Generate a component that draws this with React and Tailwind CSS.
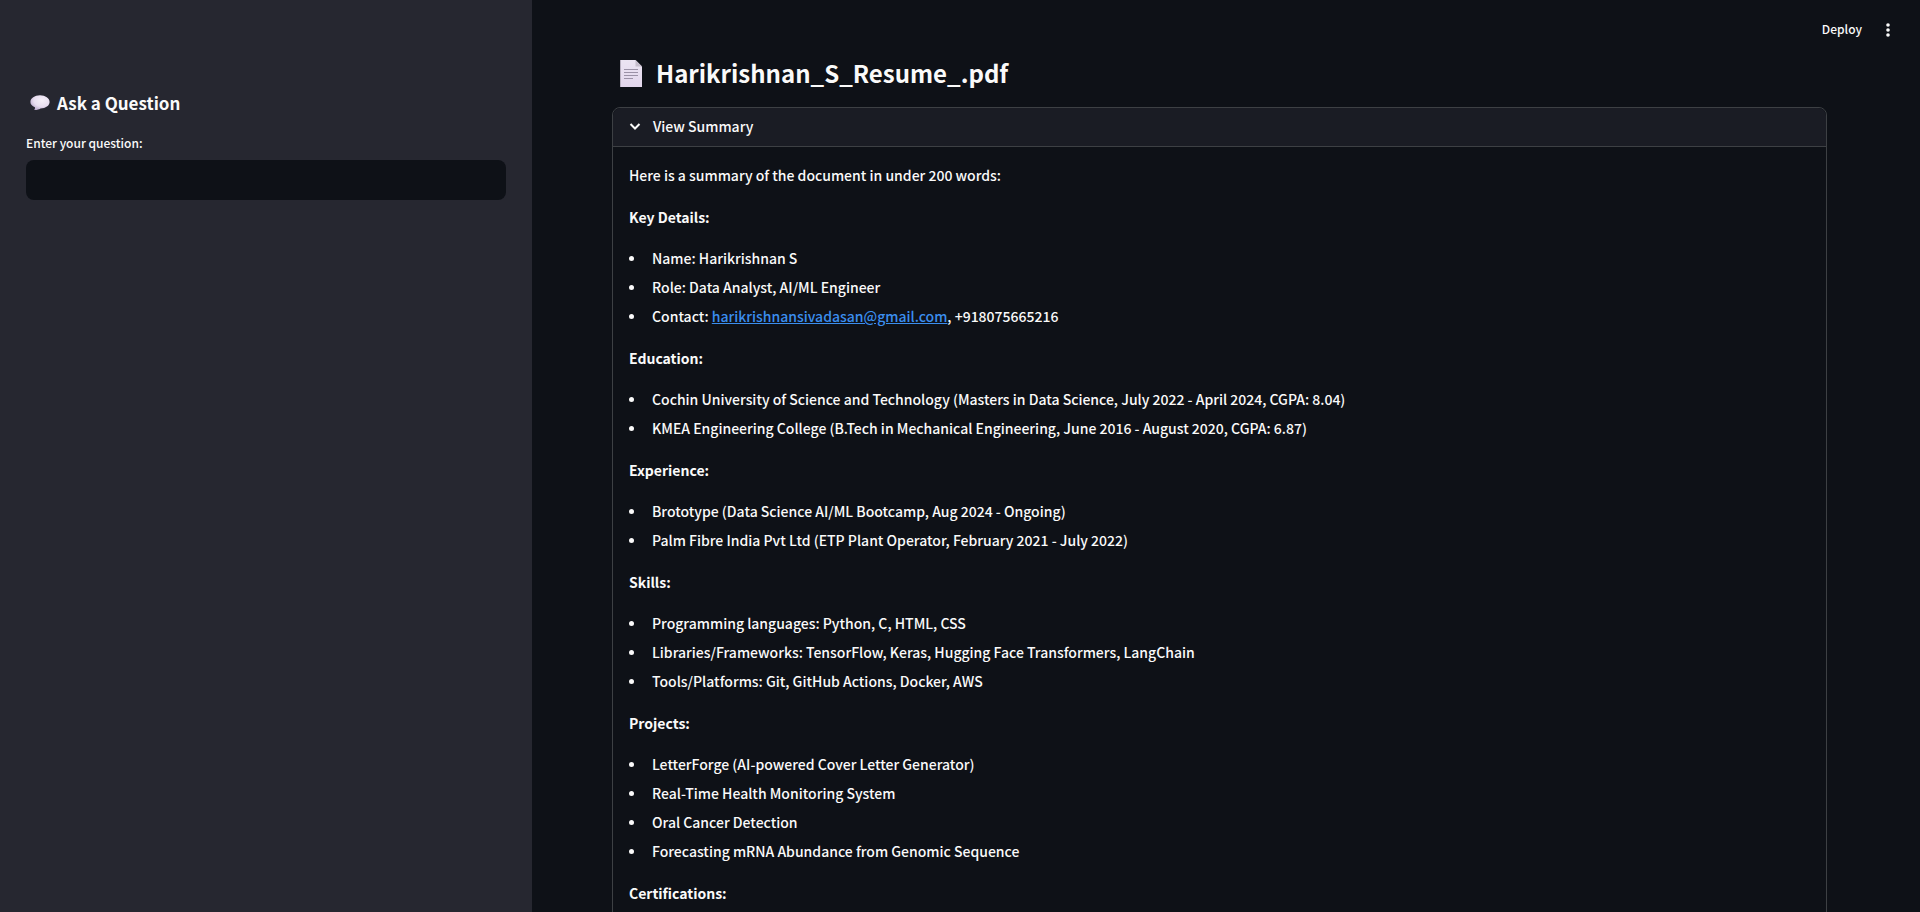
import { useState } from "react";

const sections = [
  {
    title: "Key Details:",
    items: [
      "Name: Harikrishnan S",
      "Role: Data Analyst, AI/ML Engineer",
      <>
        Contact:{" "}
        <a
          href="mailto:harikrishnansivadasan@gmail.com"
          className="text-[#3b8eee] underline"
        >
          harikrishnansivadasan@gmail.com
        </a>
        , +918075665216
      </>,
    ],
  },
  {
    title: "Education:",
    items: [
      "Cochin University of Science and Technology (Masters in Data Science, July 2022 - April 2024, CGPA: 8.04)",
      "KMEA Engineering College (B.Tech in Mechanical Engineering, June 2016 - August 2020, CGPA: 6.87)",
    ],
  },
  {
    title: "Experience:",
    items: [
      "Brototype (Data Science AI/ML Bootcamp, Aug 2024 - Ongoing)",
      "Palm Fibre India Pvt Ltd (ETP Plant Operator, February 2021 - July 2022)",
    ],
  },
  {
    title: "Skills:",
    items: [
      "Programming languages: Python, C, HTML, CSS",
      "Libraries/Frameworks: TensorFlow, Keras, Hugging Face Transformers, LangChain",
      "Tools/Platforms: Git, GitHub Actions, Docker, AWS",
    ],
  },
  {
    title: "Projects:",
    items: [
      "LetterForge (AI-powered Cover Letter Generator)",
      "Real-Time Health Monitoring System",
      "Oral Cancer Detection",
      "Forecasting mRNA Abundance from Genomic Sequence",
    ],
  },
  { title: "Certifications:", items: [] },
];

function SpeechIcon() {
  return (
    <svg className="h-4 w-5 shrink-0" viewBox="0 0 20 16" aria-hidden="true">
      <defs>
        <radialGradient id="bubble" cx="0.6" cy="0.35" r="0.7">
          <stop offset="0" stopColor="#f6f1f9" />
          <stop offset="0.6" stopColor="#e8def0" />
          <stop offset="1" stopColor="#b9a8cc" />
        </radialGradient>
      </defs>
      <path
        d="M10 0.3C15.3 0.3 19.6 3.3 19.6 7C19.6 10.7 15.6 13.3 10.5 13.5C8.6 14.7 6.3 15.2 4.2 14.9C4.9 14.1 5.1 13.3 4.9 12.3C2.1 11.2 0.4 9.3 0.4 7C0.4 3.3 4.7 0.3 10 0.3Z"
        fill="url(#bubble)"
      />
    </svg>
  );
}

function PageIcon() {
  return (
    <svg className="h-7 w-[22px] shrink-0" viewBox="0 0 22 28" aria-hidden="true">
      <defs>
        <linearGradient id="sheet" x1="0" y1="0" x2="0" y2="1">
          <stop offset="0" stopColor="#ece4f2" />
          <stop offset="1" stopColor="#e2d6ec" />
        </linearGradient>
      </defs>
      <path d="M0 1H15.5L22 7.5V28H0Z" fill="url(#sheet)" />
      <path d="M0 1H1V28H0Z" fill="#b9b0c0" />
      <path d="M15.5 1L22 7.5H15.5Z" fill="#c6bdcc" />
      <path
        d="M4 10.5H18M4 13.5H18M4 16.5H18M4 19.5H13"
        stroke="#9b91a6"
        strokeWidth="1"
      />
    </svg>
  );
}

export default function App() {
  const [question, setQuestion] = useState("");

  return (
    <div className="flex h-screen overflow-hidden bg-[#0e1117] font-['Noto_Sans_CJK_SC','Noto_Sans',sans-serif] font-medium text-[#fafafa]">
      <aside className="w-[532px] shrink-0 bg-[#262730] px-[26px] pt-[87px]">
        <h2 className="flex items-center gap-[7px] pl-1 text-[17px] leading-8 font-bold">
          <SpeechIcon />
          Ask a Question
        </h2>
        <label
          htmlFor="question"
          className="mt-3 block text-xs leading-6"
        >
          Enter your question:
        </label>
        <input
          id="question"
          type="text"
          value={question}
          onChange={(e) => setQuestion(e.target.value)}
          className="mt-[5px] block h-10 w-full rounded-lg bg-[#0e1117] px-3 text-sm outline-none"
        />
      </aside>

      <div className="relative min-w-0 flex-1 overflow-hidden">
        <header className="absolute top-0 right-0 flex h-[58px] items-center gap-[14px] pr-5">
          <button type="button" className="text-xs leading-6 font-medium">
            Deploy
          </button>
          <button
            type="button"
            aria-label="Main menu"
            className="flex h-6 w-6 items-center justify-center"
          >
            <svg className="h-4 w-4" viewBox="0 0 16 16" fill="currentColor">
              <circle cx="8" cy="4" r="1.8" />
              <circle cx="8" cy="9" r="1.8" />
              <circle cx="8" cy="14" r="1.8" />
            </svg>
          </button>
        </header>

        <main className="pt-[53px] pr-[93px] pl-20">
          <h1 className="flex items-center gap-[14px] pl-2 text-2xl leading-10 font-bold">
            <PageIcon />
            Harikrishnan_S_Resume_.pdf
          </h1>

          <details
            open
            className="mt-[14px] rounded-lg border border-[#3d4044]"
          >
            <summary className="flex cursor-pointer list-none items-center gap-2 rounded-t-lg border-b border-[#3d4044] bg-[#1a1c24] px-3 pt-[5px] pb-[7px] text-sm leading-[26px]">
              <svg
                className="h-5 w-5"
                viewBox="0 0 20 20"
                fill="none"
                stroke="currentColor"
                strokeWidth="2"
              >
                <path d="M5.5 8L10 12.5L14.5 8" />
              </svg>
              View Summary
            </summary>
            <div className="px-4 pt-[15px] text-sm leading-[26px]">
              <p className="mb-4">
                Here is a summary of the document in under 200 words:
              </p>
              {sections.map((section) => (
                <section key={section.title}>
                  <p className="mb-[15px] font-bold">{section.title}</p>
                  <ul className="mb-4 flex flex-col gap-[3px]">
                    {section.items.map((item, i) => (
                      <li key={i} className="flex items-center">
                        <span className="mr-[18px] h-[5px] w-[5px] shrink-0 rounded-full bg-[#fafafa]" />
                        <span>{item}</span>
                      </li>
                    ))}
                  </ul>
                </section>
              ))}
            </div>
          </details>
        </main>
      </div>
    </div>
  );
}
